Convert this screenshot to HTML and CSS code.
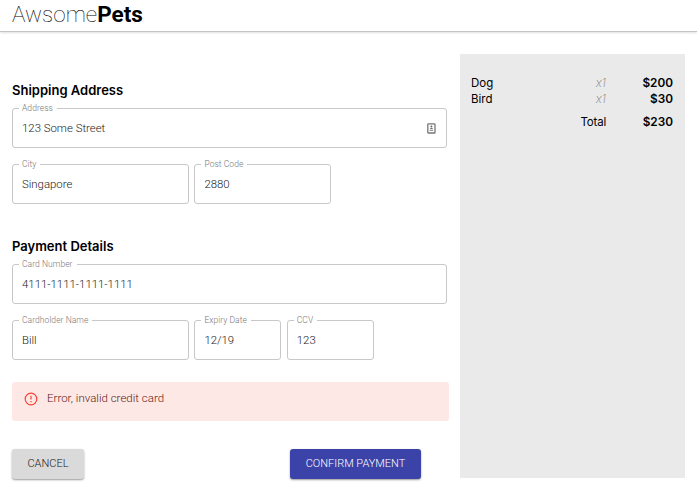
FILE: index.html
```html
<!DOCTYPE html>
<html lang="en">
<head>
<meta charset="utf-8">
<title>AwsomePets</title>
<link rel="stylesheet" href="styles.css">
</head>
<body>
<header class="header"><span class="brand-light">Awsome</span><span class="brand-bold">Pets</span></header>
<main class="page">
  <form class="checkout">
    <h2 class="heading">Shipping Address</h2>
    <div class="row">
      <fieldset class="field full"><legend>Address</legend><div class="value"><span>123 Some Street</span>
        <svg class="contact" width="9" height="11" viewBox="0 0 9 11"><rect x=".8" y=".8" width="7.2" height="9.2" rx=".6" fill="#fff" stroke="#777" stroke-width="1.3"/><circle cx="4.4" cy="3.6" r="1" fill="#666"/><path d="M2.7 6.2c0-1.6 3.4-1.6 3.4 0zM2.7 7.3h3.4v.8H2.7z" fill="#777"/></svg></div></fieldset>
    </div>
    <div class="row">
      <fieldset class="field half"><legend>City</legend><div class="value">Singapore</div></fieldset>
      <fieldset class="field post"><legend>Post Code</legend><div class="value">2880</div></fieldset>
    </div>
    <h2 class="heading payment">Payment Details</h2>
    <div class="row">
      <fieldset class="field full"><legend>Card Number</legend><div class="value">4111-1111-1111-1111</div></fieldset>
    </div>
    <div class="row">
      <fieldset class="field half"><legend>Cardholder Name</legend><div class="value">Bill</div></fieldset>
      <fieldset class="field small"><legend>Expiry Date</legend><div class="value">12/19</div></fieldset>
      <fieldset class="field small"><legend>CCV</legend><div class="value">123</div></fieldset>
    </div>
    <div class="alert" role="alert">
      <svg width="14" height="14" viewBox="0 0 14 14"><circle cx="7" cy="7" r="5.8" fill="none" stroke="#f44336" stroke-width="1.2"/><path d="M7 3.7v3.9M7 8.9v1.3" stroke="#f44336" stroke-width="1.2"/></svg>
      <span>Error, invalid credit card</span>
    </div>
    <div class="actions">
      <button type="button" class="btn cancel">CANCEL</button>
      <button type="button" class="btn confirm">CONFIRM PAYMENT</button>
    </div>
  </form>
  <aside class="summary">
    <div class="item"><span>Dog</span><span class="qty">x1</span><b>$200</b></div>
    <div class="item"><span>Bird</span><span class="qty">x1</span><b>$30</b></div>
    <div class="item total"><span></span><span class="total-label">Total</span><b>$230</b></div>
  </aside>
</main>
</body>
</html>
```
FILE: styles.css
```css
* { box-sizing: border-box; }
body {
  margin: 0;
  height: 489px;
  overflow: hidden;
  background: #fff;
  font-family: Roboto, "Liberation Sans", sans-serif;
  color: #000;
}
.header {
  height: 32px;
  padding-left: 12px;
  border-bottom: 1px solid #c4c4c4;
  box-shadow: 0 1px 2px rgba(0, 0, 0, .12);
  font-size: 22.5px;
  line-height: 28px;
  white-space: nowrap;
}
.brand-light { font-weight: 100; }
.brand-bold { font-weight: 700; }
.page {
  display: flex;
  padding: 22px 12px 0 12px;
}
.checkout {
  width: 437px;
  margin-right: 11px;
  padding-top: 27px;
}
.heading {
  margin: 0;
  height: 22px;
  font: 600 13px/18px Inter, sans-serif;
  white-space: nowrap;
}
.payment { margin-top: 33px; }
.row {
  display: flex;
  gap: 5.4px;
  height: 45px;
  margin-bottom: 11px;
}
.field {
  margin: 0;
  min-width: 0;
  height: 45px;
  padding: 0 9px;
  border: 1px solid #c8c8c8;
  border-radius: 3px;
}
.field legend {
  height: 11px;
  margin-left: -3px;
  padding: 0 4px 0 3px;
  font-size: 8.5px;
  line-height: 11px;
  font-weight: 300;
  letter-spacing: .06px;
  color: #777;
  white-space: nowrap;
}
.full { width: 435px; }
.half { width: 177px; }
.post { width: 137px; }
.small { width: 87px; }
.value {
  display: flex;
  justify-content: space-between;
  align-items: center;
  height: 28px;
  font-size: 11.4px;
  font-weight: 300;
  color: #222;
}
.contact { margin-right: 1px; }
.alert {
  display: flex;
  gap: 9px;
  height: 39px;
  margin-top: 22px;
  padding: 10px 12px;
  border-radius: 3px;
  background: #fde8e6;
  font-size: 11.5px;
  line-height: 13px;
  font-weight: 300;
  color: #611a15;
}
.actions {
  display: flex;
  justify-content: space-between;
  width: 409px;
  margin-top: 28px;
}
.btn {
  height: 30px;
  padding: 0;
  border: 0;
  border-radius: 3px;
  font: 300 11px/30px Roboto, sans-serif;
  box-shadow: 0 1px 2px rgba(0, 0, 0, .4);
}
.cancel { width: 72px; background: #dadada; color: #222; }
.confirm { width: 131px; background: #3c43a8; color: #fff; }
.summary {
  width: 225px;
  height: 424px;
  padding: 22px 12px 0 11px;
  background: #eaeaea;
  font: 400 11.5px/15.5px Inter, sans-serif;
}
.item {
  display: grid;
  grid-template-columns: 1fr 60px 67px;
}
.item b { text-align: right; font-size: 11.8px; font-weight: 600; }
.qty {
  text-align: right;
  font-style: italic;
  font-weight: 200;
  color: #777;
}
.total-label { text-align: right; letter-spacing: -.2px; }
.total { margin-top: 8px; }
```
